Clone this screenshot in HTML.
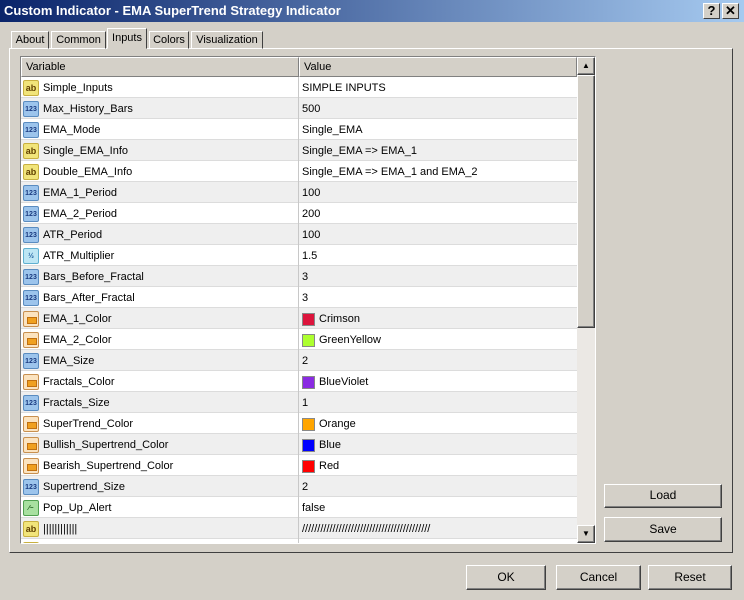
<!DOCTYPE html>
<html><head><style>
*{margin:0;padding:0;box-sizing:border-box}
body{width:744px;height:600px;background:#d4d0c8;font-family:"Liberation Sans",Arial,sans-serif;font-size:11px;color:#000;position:relative;overflow:hidden}
.abs{position:absolute}
.title{left:0;top:0;width:744px;height:22px;background:linear-gradient(to right,#0a246a,#a6caf0);color:#fff;font-weight:bold;font-size:13px;line-height:22px;padding-left:4px}
.tb{top:3px;width:17px;height:16px;background:#d4d0c8;border:1px solid;border-color:#fff #404040 #404040 #fff;color:#000;font-weight:bold;font-size:13px;text-align:center;line-height:14px}
.tab{top:31px;height:18px;border:1px solid;border-color:#fff #404040 transparent #fff;line-height:16px;text-align:center;font-size:11px}
.panel{left:9px;top:48px;width:724px;height:505px;border:1px solid;border-color:#fff #404040 #404040 #fff}
.list{left:20px;top:56px;width:576px;height:488px;border:1px solid;border-color:#808080 #fff #fff #808080;background:#fff;overflow:hidden}
.hdr{position:absolute;top:0;height:20px;background:#d4d0c8;border:1px solid;border-color:#fff #808080 #808080 #fff;line-height:19px;padding-left:4px;font-size:11px}
.row{position:absolute;left:0;width:556px;height:21px;border-bottom:1px solid #dcdcdc;line-height:22px}
.row.g{background:#efefef}
.row .n{position:absolute;left:22px}
.row .v{position:absolute;left:281px}
.row .d{position:absolute;left:277px;top:0;width:1px;height:21px;background:#c8c8c8}
.ic{position:absolute;left:2px;top:3px;width:16px;height:16px;border-radius:2px;font-size:7px;font-weight:bold;text-align:center;line-height:15px}
.ab{background:#f1e47a;border:1px solid #c8b040;color:#604000;font-size:9px}
.n123{background:#9cc4ec;border:1px solid #5a8cc0;color:#1a3a80}
.clr{background:#fbe3c0;border:1px solid #c89050}
.clr:after{content:"";position:absolute;left:3px;top:5px;width:8px;height:5px;background:#f0a020;border:1px solid #c07010}
.half{background:#bde6f4;border:1px solid #60b0d0;color:#2060a0}
.bool{background:#a8e0a0;border:1px solid #50a050;color:#206020}
.sw{position:absolute;left:281px;top:5px;width:13px;height:13px;border:1px solid #888}
.row .sv{left:298px}
.sb{left:577px;top:57px;width:18px;height:486px;background:#ebe8e4}
.btn{position:absolute;background:#d4d0c8;border:1px solid;border-color:#fff #404040 #404040 #fff;box-shadow:inset -1px -1px 0 #808080;text-align:center;font-size:12px}
</style></head><body>
<div class="abs title">Custom Indicator - EMA SuperTrend Strategy Indicator</div>
<div class="abs tb" style="left:703px">?</div>
<div class="abs tb" style="left:722px">✕</div>

<div class="abs panel"></div>
<div class="abs tab" style="left:11px;width:38px">About</div>
<div class="abs tab" style="left:51px;width:55px">Common</div>
<div class="abs tab" style="left:107px;top:28px;height:21px;width:40px;background:#d4d0c8;line-height:18px">Inputs</div>
<div class="abs tab" style="left:149px;width:40px">Colors</div>
<div class="abs tab" style="left:191px;width:72px">Visualization</div>

<div class="abs list">
<div class="hdr" style="left:0;width:278px">Variable</div>
<div class="hdr" style="left:278px;width:278px">Value</div>
<div id="rows"></div>
</div>
<div class="abs sb">
<div class="btn" style="left:0;top:0;width:18px;height:18px;font-size:8px;line-height:15px">▲</div>
<div class="btn" style="left:0;top:18px;width:18px;height:253px"></div>
<div class="btn" style="left:0;top:468px;width:18px;height:18px;font-size:8px;line-height:15px">▼</div>
</div>

<div class="btn" style="left:604px;top:484px;width:118px;height:24px;line-height:21px">Load</div>
<div class="btn" style="left:604px;top:517px;width:118px;height:25px;line-height:22px">Save</div>
<div class="btn" style="left:466px;top:565px;width:80px;height:25px;line-height:22px">OK</div>
<div class="btn" style="left:556px;top:565px;width:85px;height:25px;line-height:22px">Cancel</div>
<div class="btn" style="left:648px;top:565px;width:84px;height:25px;line-height:22px">Reset</div>

<script>
var R=[["ab","Simple_Inputs","SIMPLE INPUTS"],["n","Max_History_Bars","500"],["n","EMA_Mode","Single_EMA"],["ab","Single_EMA_Info","Single_EMA => EMA_1"],["ab","Double_EMA_Info","Single_EMA => EMA_1 and EMA_2"],["n","EMA_1_Period","100"],["n","EMA_2_Period","200"],["n","ATR_Period","100"],["h","ATR_Multiplier","1.5"],["n","Bars_Before_Fractal","3"],["n","Bars_After_Fractal","3"],["c","EMA_1_Color","Crimson","#dc143c"],["c","EMA_2_Color","GreenYellow","#adff2f"],["n","EMA_Size","2"],["c","Fractals_Color","BlueViolet","#8a2be2"],["n","Fractals_Size","1"],["c","SuperTrend_Color","Orange","#ffa500"],["c","Bullish_Supertrend_Color","Blue","#0000ff"],["c","Bearish_Supertrend_Color","Red","#ff0000"],["n","Supertrend_Size","2"],["b","Pop_Up_Alert","false"],["ab","||||||||||||","//////////////////////////////////////////"],["ab","",""]];
var h="";
R.forEach(function(r,i){
var ic=r[0]=="ab"?'<div class="ic ab">ab</div>':r[0]=="n"?'<div class="ic n123">123</div>':r[0]=="h"?'<div class="ic half">½</div>':r[0]=="b"?'<div class="ic bool">⁄~</div>':'<div class="ic clr"></div>';
var v=r[0]=="c"?'<div class="sw" style="background:'+r[3]+'"></div><span class="v sv">'+r[2]+'</span>':'<span class="v">'+r[2]+'</span>';
h+='<div class="row'+(i%2?' g':'')+'" style="top:'+(20+i*21)+'px">'+ic+'<span class="n">'+r[1]+'</span><div class="d"></div>'+v+'</div>';
});
document.getElementById("rows").innerHTML=h;
</script>
</body></html>
